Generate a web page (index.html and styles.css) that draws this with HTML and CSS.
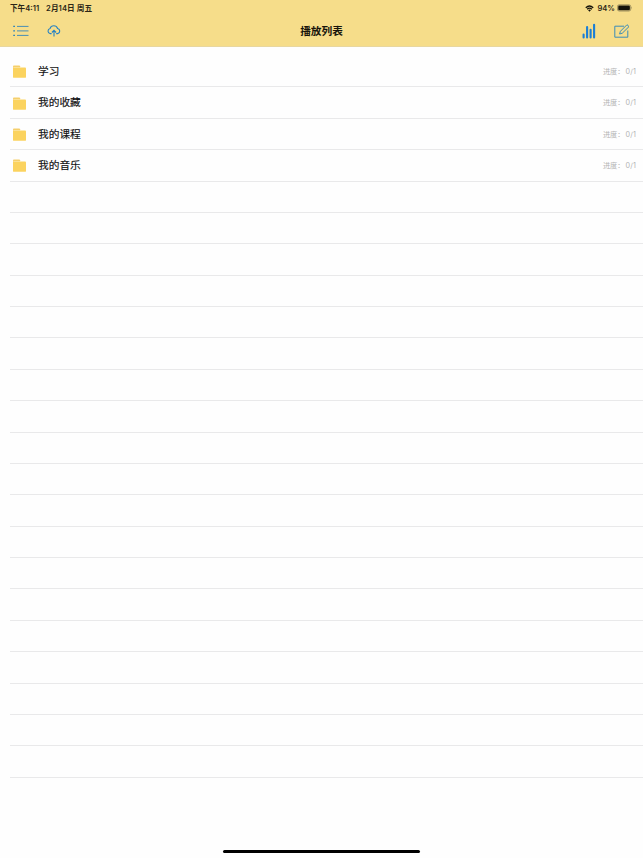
FILE: index.html
```
<!DOCTYPE html>
<html lang="zh-CN">
<head>
	<meta charset="utf-8">
	<title>播放列表</title>
	<link rel="stylesheet" href="styles.css">
</head>

<body>
	<header class="top">
		<div class="status-bar">
			<span class="time">下午4:11</span>
			<span class="date">2月14日 周五</span>
			<svg class="wifi" viewBox="0 0 18 13">
				<path d="M1.5 5Q9-2 16.5 5M4.2 8Q9 3.6 13.8 8" fill="none" stroke="#141209" stroke-width="2.5"></path>
				<path d="M6 9.7Q9 7.3 12 9.7L9 12.8z" fill="#141209"></path>
			</svg>
			<span class="percent">94%</span>
			<svg class="battery" viewBox="0 0 17 8">
				<rect x="0.4" y="0.6" width="14.2" height="6.6" rx="2" fill="none" stroke="#756c49" stroke-width="0.7"></rect>
				<rect x="1.3" y="1.4" width="12.4" height="5" rx="1.2" fill="#141209"></rect>
				<path d="M15.3 2.8Q16.3 3.9 15.3 5z" fill="#756c49"></path>
			</svg>
		</div>
		<nav class="nav-bar">
			<div class="nav-side">
				<svg class="icon-list" viewBox="0 0 16 12">
					<path d="M4 1.4H15.5M4 5.9H15.5M4 10.4H15.5" stroke="#3485b9" stroke-width="0.9"></path>
					<path d="M0.2 1.4H2M0.2 5.9H2M0.2 10.4H2" stroke="#3485b9" stroke-width="1.1"></path>
				</svg>
				<svg class="icon-cloud" viewBox="0 0 14 12">
					<path d="M4.6 8.6H3.3A2.6 2.6 0 0 1 3 3.5A4 4 0 0 1 10.6 3.5A2.6 2.6 0 0 1 10.7 8.6H9.2" fill="none" stroke="#2581c4" stroke-width="1.1"></path>
					<path d="M7 11.4V5.6M4.9 7.5L7 5.3L9.1 7.5" fill="none" stroke="#2581c4" stroke-width="1.1"></path>
				</svg>
			</div>
			<h1>播放列表</h1>
			<div class="nav-side nav-right">
				<svg class="icon-bars" viewBox="0 0 14 16">
					<path d="M1.6 11.5V14.5M5.1 4V14.5M8.6 6.8V14.5M12.1 1.8V14.5" stroke="#1a7ed6" stroke-width="2.1" stroke-linecap="round"></path>
				</svg>
				<svg class="icon-edit" viewBox="0 0 16 14">
					<path d="M10 2.2H0.8V13.2H13.8V6.5" fill="none" stroke="#3b8cb8" stroke-width="1"></path>
					<path d="M5.6 10L6.4 7.3L13 0.7L15 2.6L8.3 9.2z" fill="none" stroke="#3b8cb8" stroke-width="1"></path>
				</svg>
			</div>
		</nav>
	</header>

	<ul id="playlists" class="list"></ul>
	<div class="home-indicator"></div>

	<script>
		const names = ["学习", "我的收藏", "我的课程", "我的音乐"];
		const rowCount = 23;
		const list = document.getElementById("playlists");

		const folder = `<svg class="folder" viewBox="0 0 13 13">
			<path d="M0 1.4Q0 0.5 0.9 0.5H6.2Q7 0.5 7.2 1.4V4H0z" fill="#f5cf6c"></path>
			<rect x="0" y="2.6" width="13" height="10.2" rx="0.9" fill="#fbd35f"></rect>
			<path d="M0.3 2.5H7.8" stroke="#fff1c9" stroke-width="0.5"></path>
		</svg>`;

		// rows after the last playlist stay empty and only draw their separator
		for (let i = 0; i < rowCount; i++) {
			const row = document.createElement("li");
			row.classList.add("row");
			if (i < names.length) {
				row.innerHTML = `${folder}<span class="name">${names[i]}</span><span class="progress">进度：<span class="count">0/1</span></span>`;
			}
			list.appendChild(row);
		}
	</script>
</body>

</html>
```
FILE: styles.css
```
* {
	box-sizing: border-box;
}

body {
	margin: 0;
	height: 858px;
	overflow: hidden;
	position: relative;
	background-color: #fefefe;
	color: #111;
	font-family: Inter, "Noto Sans CJK SC", sans-serif;
}

svg {
	display: block;
	flex: none;
}

.top {
	height: 47px;
	background-color: #f6dd8a;
	border-bottom: 1px solid #e8d7a0;
}

.status-bar {
	display: flex;
	align-items: center;
	height: 16px;
	padding: 0 10px 0 10px;
	font-size: 7.6px;
	font-weight: 600;
	line-height: 16px;
	color: #2b2616;
	white-space: nowrap;
}

.time,
.date,
.percent {
	padding-top: 1px;
}

.date {
	margin-left: 7px;
	letter-spacing: 0.1px;
}

.wifi {
	width: 9px;
	height: 7px;
	margin-left: auto;
}

.percent {
	margin: 0 2px 0 3px;
}

.battery {
	width: 16px;
	height: 8px;
}

.nav-bar {
	display: flex;
	align-items: center;
	height: 30px;
	padding: 0 13px 0 13px;
}

.nav-side {
	display: flex;
	align-items: center;
	flex: 1;
}

.nav-right {
	justify-content: flex-end;
}

h1 {
	margin: 0;
	padding-top: 1px;
	font-size: 10.7px;
	font-weight: 600;
	line-height: 16px;
	color: #17140b;
}

.icon-list {
	width: 16px;
	height: 12px;
}

.icon-cloud {
	width: 14px;
	height: 12px;
	margin-left: 18px;
}

.icon-bars {
	width: 14px;
	height: 16px;
	margin-right: 18px;
}

.icon-edit {
	width: 16px;
	height: 14px;
}

.list {
	margin: 0;
	padding: 9px 0 0 10px;
	list-style: none;
}

.row {
	display: flex;
	align-items: center;
	height: 31.39px;
	padding: 1px 7px 0 3px;
	border-bottom: 1px solid #e9e9ea;
}

.folder {
	width: 13px;
	height: 13px;
	margin-left: -0.5px;
}

.name {
	margin-left: 12.5px;
	padding-top: 0.6px;
	font-size: 10.7px;
	font-weight: 400;
	line-height: 16px;
	-webkit-text-stroke: 0.15px #111;
}

.progress {
	margin-left: auto;
	padding-top: 0.6px;
	font-size: 7.2px;
	line-height: 12px;
	color: #b4b4b4;
}

.count {
	margin-left: 1px;
	letter-spacing: 0.15px;
}

.home-indicator {
	position: absolute;
	left: 223px;
	bottom: 5px;
	width: 197px;
	height: 3px;
	border-radius: 2px;
	background-color: #000;
}
```
